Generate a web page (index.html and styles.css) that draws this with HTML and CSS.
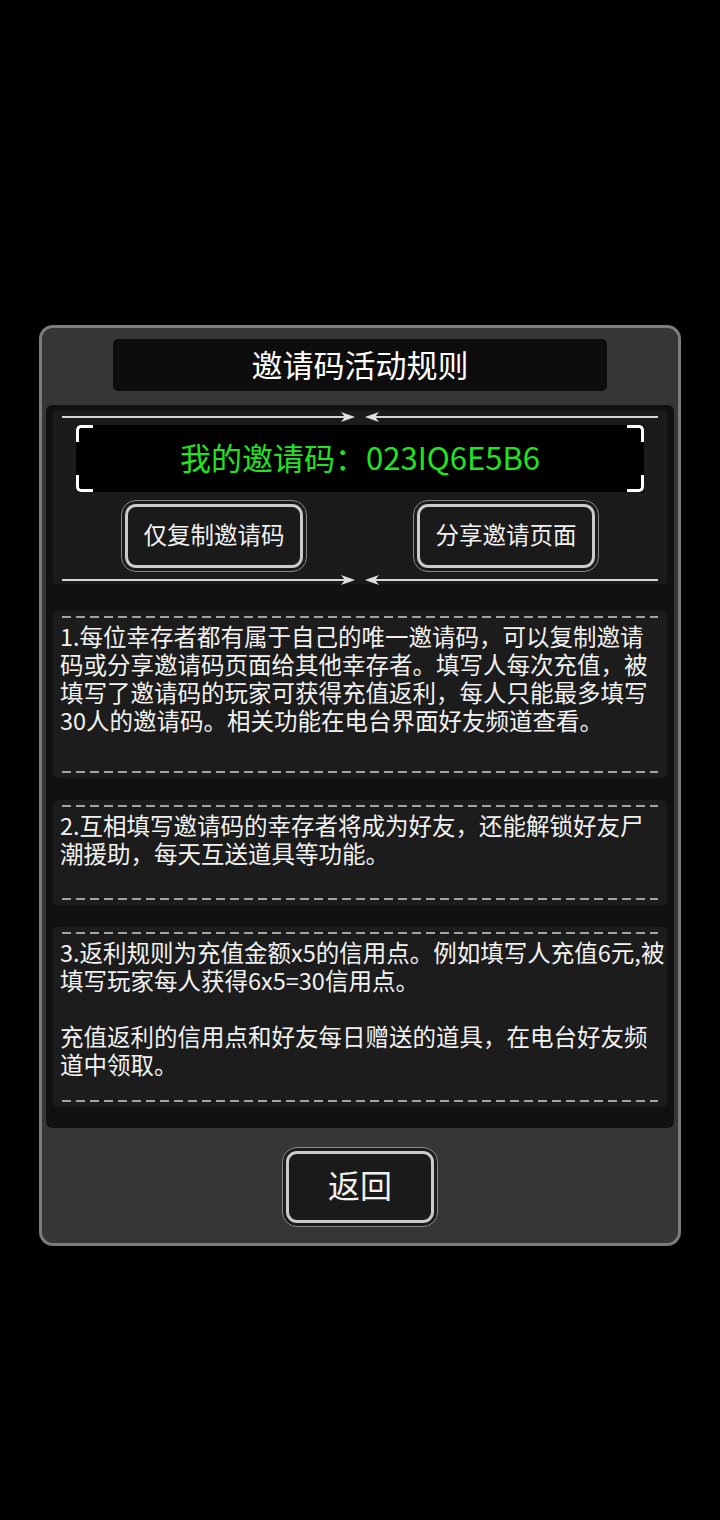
FILE: index.html
```html
<!DOCTYPE html>
<html lang="zh-CN">
<head>
  <meta charset="UTF-8" />
  <meta name="viewport" content="width=device-width, initial-scale=1.0"/>
  <title>邀请码活动规则</title>
  <link rel="stylesheet" href="styles.css">
</head>
<body>
  <div class="frame">
    <div class="title-bar">邀请码活动规则</div>

    <div class="panel">
      <div class="code-section">
        <svg class="divider" width="596" height="12" viewBox="0 0 596 12">
          <line x1="0" y1="6" x2="284" y2="6" stroke="#d6d6d6" stroke-width="2"/>
          <path d="M293 6 L279 1 L283 6 L279 11 Z" fill="#e2e2e2"/>
          <line x1="312" y1="6" x2="596" y2="6" stroke="#d6d6d6" stroke-width="2"/>
          <path d="M303 6 L317 1 L313 6 L317 11 Z" fill="#e2e2e2"/>
        </svg>

        <div class="code-box">
          <span class="corner tl"></span>
          <span class="corner tr"></span>
          <span class="corner bl"></span>
          <span class="corner br"></span>
          我的邀请码：023IQ6E5B6
        </div>

        <div class="btn-row">
          <div class="btn"><div class="btn-inner">仅复制邀请码</div></div>
          <div class="btn"><div class="btn-inner">分享邀请页面</div></div>
        </div>

        <svg class="divider" width="596" height="12" viewBox="0 0 596 12">
          <line x1="0" y1="6" x2="284" y2="6" stroke="#d6d6d6" stroke-width="2"/>
          <path d="M293 6 L279 1 L283 6 L279 11 Z" fill="#e2e2e2"/>
          <line x1="312" y1="6" x2="596" y2="6" stroke="#d6d6d6" stroke-width="2"/>
          <path d="M303 6 L317 1 L313 6 L317 11 Z" fill="#e2e2e2"/>
        </svg>
      </div>

      <div class="rule rule-1">
        <div class="dash"></div>
        <p>1.每位幸存者都有属于自己的唯一邀请码，可以复制邀请<br>码或分享邀请码页面给其他幸存者。填写人每次充值，被<br>填写了邀请码的玩家可获得充值返利，每人只能最多填写<br>30人的邀请码。相关功能在电台界面好友频道查看。</p>
        <div class="dash"></div>
      </div>

      <div class="rule rule-2">
        <div class="dash"></div>
        <p>2.互相填写邀请码的幸存者将成为好友，还能解锁好友尸<br>潮援助，每天互送道具等功能。</p>
        <div class="dash"></div>
      </div>

      <div class="rule rule-3">
        <div class="dash"></div>
        <p>3.返利规则为充值金额x5的信用点。例如填写人充值6元,被<br>填写玩家每人获得6x5=30信用点。<br><br>充值返利的信用点和好友每日赠送的道具，在电台好友频<br>道中领取。</p>
        <div class="dash"></div>
      </div>
    </div>

    <div class="back-row">
      <div class="btn btn-back"><div class="btn-inner">返回</div></div>
    </div>
  </div>
</body>
</html>
```

FILE: styles.css
```css
body {
  margin: 0;
  background-color: #000;
  font-family: "Noto Sans CJK SC", "Noto Sans", sans-serif;
  color: #fff;
}

.frame {
  width: 636px;
  margin: 325px auto 0;
  border: 3px solid #7c7c7c;
  border-radius: 14px;
  background-color: #353636;
  padding: 11px 0 16px;
  box-sizing: content-box;
}

.title-bar {
  width: 494px;
  height: 52px;
  margin: 0 auto;
  background-color: #0d0d0d;
  border-radius: 5px;
  font-size: 31px;
  line-height: 50px;
  text-align: center;
}

.panel {
  margin: 14px 4px 0;
  padding: 5px 7px 21px;
  background-color: #111;
  border-radius: 6px;
  display: flex;
  flex-direction: column;
  gap: 22px;
}

/* bagian kode undangan */
.code-section {
  background-color: #1b1b1b;
  border-radius: 3px;
  display: flex;
  flex-direction: column;
  align-items: center;
  margin-bottom: 5px;
}

.divider {
  display: block;
  margin-top: 1px;
}

.code-section .divider:last-child {
  margin-top: 2px;
  margin-bottom: -2px;
}

.code-box {
  position: relative;
  width: 568px;
  height: 67px;
  margin-top: 2px;
  background-color: #000;
  color: #22e322;
  font-size: 31px;
  line-height: 63px;
  text-align: center;
}

.corner {
  position: absolute;
  width: 14px;
  height: 14px;
  border: 0 solid #fff;
}

.corner.tl { left: 0; top: 0; border-left-width: 3px; border-top-width: 3px; border-top-left-radius: 5px; }
.corner.tr { right: 0; top: 0; border-right-width: 3px; border-top-width: 3px; border-top-right-radius: 5px; }
.corner.bl { left: 0; bottom: 0; border-left-width: 3px; border-bottom-width: 3px; border-bottom-left-radius: 5px; }
.corner.br { right: 0; bottom: 0; border-right-width: 3px; border-bottom-width: 3px; border-bottom-right-radius: 5px; }

.btn-row {
  align-self: stretch;
  display: flex;
  justify-content: space-between;
  padding: 0 68px;
  margin-top: 8px;
}

.btn {
  width: 186px;
  height: 72px;
  box-sizing: border-box;
  border: 1px solid #8a8a8a;
  border-radius: 15px;
  padding: 3px;
  background-color: #1b1b1b;
}

.btn-inner {
  height: 100%;
  box-sizing: border-box;
  border: 3px solid #cbcbcb;
  border-radius: 11px;
  background-color: #1a1a1a;
  display: flex;
  align-items: center;
  justify-content: center;
  padding-bottom: 5px;
  font-size: 23.5px;
  color: #f2f2f2;
}

/* kotak aturan */
.rule {
  background-color: #1c1c1c;
  border-radius: 5px;
  padding: 5px 7px;
}

.rule p {
  margin: 4px 0 0;
  font-size: 23.5px;
  line-height: 28px;
  color: #f2f2f2;
  white-space: nowrap;
}

.dash {
  height: 2px;
  margin: 0 2px;
  background: repeating-linear-gradient(to right, #a3a3a3 0 9px, transparent 9px 14px);
}

.rule-1 p { padding-bottom: 37px; }
.rule-2 p { padding-bottom: 31px; }
.rule-3 p { padding-bottom: 22px; }

.back-row {
  display: flex;
  justify-content: center;
  margin-top: 19px;
}

.btn-back {
  width: 156px;
  height: 80px;
}

.btn-back .btn-inner {
  font-size: 32px;
  padding-bottom: 7px;
}
```
